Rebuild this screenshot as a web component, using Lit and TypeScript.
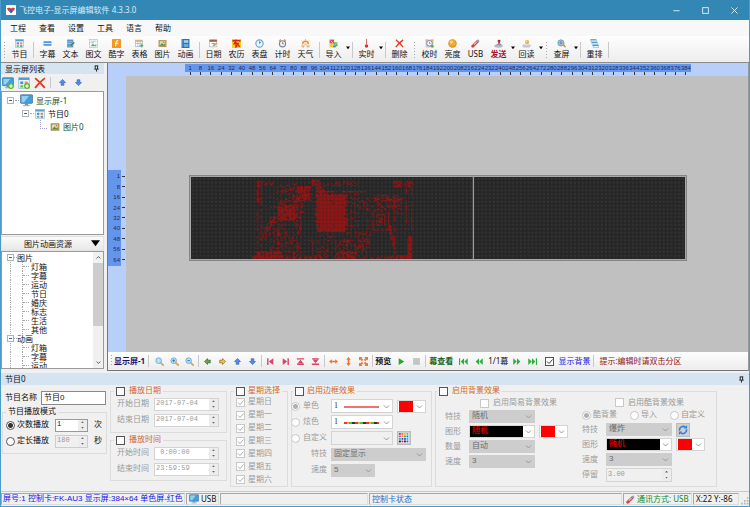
import { LitElement, html, svg, css, nothing, TemplateResult } from "lit";
import { customElement } from "lit/decorators.js";
import { classMap } from "lit/directives/class-map.js";

/* ---------- icons, all on a 16 x 16 grid ---------- */
const glass = (mark: unknown) => svg`<path d="M10 10l4.5 4.5" stroke="#e0a850" stroke-width="3.4" stroke-linecap="round"/><circle cx="6.5" cy="6.5" r="5" fill="#b9e2f7" stroke="#6fa9cf" stroke-width="1.6"/>${mark}`;
const pic = svg`<rect x="1" y="2" width="14" height="12" fill="#b58a45"/><rect x="3" y="4" width="10" height="8" fill="#cfe3b8"/><path d="M3 12l4-5 3 3 2-2 1 4z" fill="#5b8f4a"/><circle cx="10.500" cy="6" r="1.300" fill="#d8603a"/>`;
const program = svg`<rect x="1" y="1" width="14" height="14" fill="#eef5fb" stroke="#8fb4d6"/><rect x="1" y="1" width="14" height="3" fill="#5b9bd8"/><rect x="3" y="6" width="4" height="3.500" fill="#4a90d9"/><rect x="9" y="6" width="4" height="3.500" fill="#ef8d3c"/><rect x="3" y="11" width="4" height="3" fill="#6cbf4a"/><rect x="9" y="11" width="4" height="3" fill="#4a90d9"/>`;
const monitor = svg`<rect x="0.500" y="1" width="15" height="10.500" rx="1" fill="#3f9fdc" stroke="#5a7488"/><path d="M2 2.500h9L5 10H2z" fill="#8fd0f5"/><rect x="6" y="11.500" width="4" height="2" fill="#7d8c99"/><rect x="4" y="13.500" width="8" height="1.500" fill="#9fb0bd"/>`;
const plus = svg`<circle cx="12" cy="12" r="4" fill="#5db82c"/><path d="M12 9.500v5M9.500 12h5" stroke="#fff" stroke-width="1.500"/>`;
const arrow = (fill: string, stroke: string, turn: number) =>
  svg`<path transform="rotate(${turn} 8 8)" d="M8 2.500l5.500 5.500h-3v5h-5V8h-3z" fill=${fill} stroke=${stroke}/>`;
const usb = svg`<path d="M3 13L11 5" stroke="#c7473c" stroke-width="5" stroke-linecap="round"/><path d="M5 10l5-5" stroke="#f3c9c2" stroke-width="2"/><path d="M11 5l3-3" stroke="#8aa4bb" stroke-width="4"/>`;
const rewind = svg`<path d="M9 2v12L3 8zM15.500 2v12L9.500 8z" fill="#25b13c"/>`;
const forward = svg`<path d="M7 2v12l6-6zM.5 2v12l6-6z" fill="#25b13c"/>`;

const ICONS: Record<string, unknown> = {
  logo: svg`<rect width="16" height="16" rx="1" fill="#fff"/><path d="M1.500 5.500L5 4l3 1.500L11 4l3.500 1.500L12.500 9h-9z" fill="#e2342c"/><path d="M4.500 9.500L8 7l3.500 2.500L8 13.500z" fill="#2f5bd0"/>`,
  program, monitor, pic, usb,
  subtitle: svg`<rect x="1" y="4" width="14" height="8" fill="#4f93d2"/><rect x="1" y="7" width="14" height="2" fill="#dcecf9"/>`,
  text: svg`<rect x="2" y="1" width="11" height="14" fill="#4d9bd6"/><path d="M2 5h9M2 8h7" stroke="#bfe0f5"/><path d="M7 11l6-6 2.500 2-6 6-3 1z" fill="#2b6da5" stroke="#e6c27a"/>`,
  mixed: svg`<rect x="1" y="1" width="14" height="14" fill="#f4fafd" stroke="#8ec0de"/><path d="M3 4h10M3 6.500h6" stroke="#6ab0dd"/><path d="M3 13l4-5 3 3 3-2v4z" fill="#67b55c"/>`,
  cool: svg`<rect width="16" height="16" rx="1" fill="#f39a1d"/><path d="M11 3.500q-3-1.500-3.500 2L6.500 13M5 7.500h6" stroke="#fff" stroke-width="1.800" fill="none"/>`,
  table: svg`<rect x="1" y="2" width="12" height="11" fill="#fff" stroke="#7ba7cc"/><rect x="1" y="2" width="12" height="3" fill="#e6a85a"/><path d="M1 8h12M5 5v8M9 5v8" stroke="#7ba7cc"/><path d="M8 12h7M12 9v6" stroke="#58b03a" stroke-width="2"/>`,
  film: svg`<rect x="1" y="0" width="14" height="16" fill="#2e6fae"/><rect x="5" y="2" width="8" height="5" fill="#9bd0f2"/><rect x="5" y="9" width="8" height="5" fill="#6ab1e2"/><path d="M3 1v14" stroke="#a9cdea" stroke-dasharray="2 1.500"/>`,
  date: svg`<rect x="1" y="2" width="13" height="12" fill="#fbfbfb" stroke="#a9a9a9"/><rect x="1" y="1" width="13" height="4" fill="#a65b3d"/><path d="M5 8h5l-3 5" stroke="#555" fill="none"/><path d="M9 12l5-5" stroke="#e48b2c" stroke-width="2"/>`,
  lunar: svg`<rect width="16" height="16" fill="#f7d21a"/><path d="M2 5V3h12v2M8 1L3 10M7 5v9l3-2M8 7l6 7M12 7l-3 3" stroke="#e02416" stroke-width="2.400" fill="none"/>`,
  dial: svg`<circle cx="8" cy="8" r="6.500" fill="#eaf4fb" stroke="#6ea3d0" stroke-width="2"/><path d="M8 4v4l3-3" stroke="#3f6c96" stroke-width="1.300" fill="none"/>`,
  timer: svg`<path d="M2 4l3-3M14 4l-3-3" stroke="#d9a13a" stroke-width="2.500"/><circle cx="8" cy="8.500" r="5.500" fill="#f7f3e0" stroke="#7d80b8" stroke-width="2"/><path d="M8 5.500v3h2.500" stroke="#444" fill="none"/>`,
  weather: svg`<path d="M3 9a5 5 0 0 1 10 0" fill="none" stroke="#f08a24" stroke-width="2.500"/><path d="M8 .5v2M2 3l1.500 1.500M14 3l-1.500 1.500M2 10v5M5.500 10l-1 5M10.500 10l1 5M14 10v5" stroke="#f39a3a" stroke-width="1.700"/><circle cx="8" cy="9" r="2" fill="#f9c987"/>`,
  import: svg`<rect x="1" y="1" width="8" height="7" fill="#e24b5d"/><rect x="1" y="9" width="6" height="6" fill="#f1c83a"/><rect x="8" y="6" width="7" height="7" fill="#58b947"/><path d="M3 3l4 4" stroke="#fff"/><path d="M9.500 11l4-3" stroke="#fff"/><rect x="7" y="12" width="5" height="3" fill="#4b8be0"/>`,
  live: svg`<path d="M8 0v9" stroke="#e36a6a" stroke-width="2"/><circle cx="8" cy="12.500" r="3" fill="#d92e2e"/>`,
  del: svg`<path d="M1.500 1.500Q8 7 14.500 14.500M14.500 1.500Q7 7 1.500 14.500" stroke="#e0391d" stroke-width="2.400" fill="none"/>`,
  sync: svg`<rect x="1" y="1" width="14" height="14" fill="#bfcbe6"/><circle cx="8" cy="7.500" r="5" fill="#fdf9e6" stroke="#7b6fb0" stroke-width="1.500"/><path d="M8 5v3h2" stroke="#555" fill="none"/><path d="M1 2h4M11 2h4" stroke="#e2b23e" stroke-width="2"/><circle cx="13" cy="13" r="2.500" fill="#5db82c"/>`,
  sun: svg`<circle cx="8" cy="8" r="7.500" fill="#d98a1e"/><circle cx="8" cy="7.500" r="6" fill="#f2a92f"/><circle cx="6" cy="5.500" r="3" fill="#fbd67a"/>`,
  send: svg`<ellipse cx="8" cy="12.500" rx="7.500" ry="3" fill="#b9b9c2"/><path d="M3 11l4-3h5l2 3z" fill="#8f97a8"/><path d="M5 4l4-3 4 3h-2.500v4h-3V4z" fill="#b5182b"/>`,
  read: svg`<ellipse cx="8" cy="12" rx="7.500" ry="3.300" fill="#c3c3c9"/><path d="M3 11l4-4h4l3 4z" fill="#e4e4e8"/><circle cx="9" cy="5.500" r="3.800" fill="#e8b04a"/><circle cx="8" cy="4.500" r="1.500" fill="#fae3ab"/>`,
  inspect: svg`<circle cx="7" cy="7" r="5.500" fill="#8cc7ec" stroke="#5f9cc9" stroke-width="1.500"/><path d="M11.500 10.500l3.500 4" stroke="#dc9b3c" stroke-width="3"/><path d="M7 3.500v6M4.500 7h5" stroke="#dd6b4d" stroke-width="2"/>`,
  rearrange: svg`<path d="M1 1h10l1 4H2zM3 6h10l1 4H4zM5 11h10l1 4H6z" fill="#e6f3fb" stroke="#6fb4dc"/><path d="M1 1.500h10M3 6.500h10M5 11.500h10" stroke="#3a8fc4" stroke-width="1.600"/>`,
  addScreen: svg`${monitor}${plus}`,
  addProgram: svg`${program}${plus}`,
  up: arrow("#4c8bf0", "#2a5fc0", 0),
  down: arrow("#4c8bf0", "#2a5fc0", 180),
  left: arrow("#6aa544", "#2e5c3c", 270),
  right: arrow("#ecc24a", "#6e5a20", 90),
  zoom: glass(nothing),
  zoomIn: glass(svg`<path d="M6.500 4v5M4 6.500h5" stroke="#2b6da5" stroke-width="1.500"/>`),
  zoomOut: glass(svg`<path d="M4 6.500h5" stroke="#2b6da5" stroke-width="1.500"/>`),
  alignL: svg`<path d="M2 2h2.500v12H2zM13 2v12L5 8z" fill="#d8456a"/>`,
  alignR: svg`<path d="M11.500 2H14v12h-2.500zM3 2v12l8-6z" fill="#d8456a"/>`,
  alignT: svg`<path d="M1.500 2h13v2.500h-13zM8 5l5 6H3zM2 11.500h12V14H2z" fill="#d8456a"/>`,
  alignB: svg`<path d="M1.500 11.500h13V14h-13zM8 11l5-6H3zM2 2h12v2.500H2z" fill="#d8456a"/>`,
  wide: svg`<path d="M0 8l5-4v2.500h6V4l5 4-5 4V9.500H5V12z" fill="#f4742b"/>`,
  tall: svg`<path d="M8 0l4 5H9.500v6H12l-4 5-4-5h2.500V5H4z" fill="#f4742b"/>`,
  full: svg`<path d="M0 0h6L4.500 2l3 3L5 7.500l-3-3L0 6zM16 0v6l-2-1.500-3 3L8.500 5l3-3L10 0zM0 16v-6l2 1.500 3-3L7.500 11l-3 3L6 16zM16 16h-6l1.500-2-3-3L11 8.500l3 3 2-1.500z" fill="#f4742b"/>`,
  play: svg`<path d="M3 2v12l10-6z" fill="#1faa32"/>`,
  stop: svg`<rect x="2" y="2" width="12" height="12" fill="#c4c4c4"/>`,
  first: svg`<path d="M0 2h2v12H0z" fill="#25b13c"/>${rewind}`,
  prev: rewind,
  next: forward,
  last: svg`<path d="M14 2h2v12h-2z" fill="#25b13c"/>${forward}`,
  pin: svg`<path d="M4 2h8M5 2v7M10.500 2v7M3 9.500h10M8 10v5" stroke="#111" stroke-width="2" fill="none"/>`,
  refresh: svg`<path d="M2.500 9A5.600 5.600 0 0 1 12 4M13.500 7A5.600 5.600 0 0 1 4 12" fill="none" stroke="#2f7fd6" stroke-width="2.600"/><path d="M9.500 5.500h5V0zM6.500 10.500h-5V16z" fill="#2f7fd6"/>`,
  palette: svg`<rect width="16" height="16" fill="#fff"/>${["#d33", "#f55", "#fb3", "#5c3", "#e3c", "#f80", "#3a3", "#26f", "#0cc", "#26f", "#93c", "#0cc", "#222", "#b33", "#222", "#44f"].map(
    (c, i) => svg`<rect x=${(i % 4) * 4} y=${Math.floor(i / 4) * 4} width="3" height="3" fill=${c}/>`)}`,
  min: svg`<path d="M1 8.500h14" stroke="#e8f2f8" stroke-width="2"/>`,
  max: svg`<rect x="1.500" y="1.500" width="13" height="13" fill="none" stroke="#e8f2f8" stroke-width="2"/>`,
  close: svg`<path d="M1 1l14 14M15 1L1 15" stroke="#e8f2f8" stroke-width="2"/>`,
  caret: svg`<path d="M0 2h16L8 13z" fill="#000"/>`,
  scrollUp: svg`<path d="M2 11l6-6 6 6" fill="none" stroke="#555" stroke-width="3"/>`,
  scrollDown: svg`<path d="M2 5l6 6 6-6" fill="none" stroke="#555" stroke-width="3"/>`,
  grip: svg`<path d="M12 2h3v3h-3zM12 7h3v3h-3zM12 12h3v3h-3zM7 7h3v3H7zM7 12h3v3H7zM2 12h3v3H2z" fill="#b5b5b5"/>`,
};

const icon = (name: string, size = "i9"): TemplateResult =>
  html`<svg class="icon ${size}" viewBox="0 0 16 16" aria-hidden="true">${ICONS[name]}</svg>`;

/* ---------- LED picture: rectangles [x, y, w, h, fill ratio] in LED cells ---------- */
const AREAS = [
  [97, 14, 24, 29, 0.97], [98, 10, 8, 6, 0.8], [93, 2, 7, 5, 0.7], [96, 5, 7, 6, 0.7], [82, 7, 11, 12, 0.8],
  [68, 22, 14, 12, 0.85], [80, 18, 8, 10, 0.4], [81, 26, 5, 16, 0.35], [69, 6, 5, 16, 0.35], [74, 5, 8, 6, 0.4], [76, 12, 7, 10, 0.4],
  [51, 3, 2, 17, 0.75], [54, 3, 1, 17, 0.7], [51, 20, 1, 38, 0.45], [54, 20, 1, 38, 0.45],
  [51, 3, 15, 4, 0.4], [64, 27, 5, 6, 0.6], [61, 31, 5, 5, 0.55], [58, 35, 6, 6, 0.5], [55, 39, 6, 6, 0.55], [54, 44, 5, 5, 0.4],
  [66, 34, 8, 9, 0.3], [62, 42, 24, 16, 0.22], [67, 40, 2, 18, 0.5],
  [51, 58, 20, 6, 0.8], [47, 62, 125, 2, 0.5], [71, 58, 44, 5, 0.2], [115, 58, 14, 6, 0.65], [157, 3, 7, 5, 0.85],
  [167, 3, 5, 5, 0.85], [155, 61, 17, 3, 0.7], [168, 46, 4, 18, 0.9], [167, 8, 1, 34, 0.5], [171, 8, 1, 34, 0.5],
  [141, 14, 22, 5, 0.5], [143, 19, 6, 8, 0.35], [151, 18, 8, 8, 0.45], [159, 16, 6, 14, 0.25],
  [131, 18, 10, 8, 0.2], [129, 14, 1, 28, 0.6], [137, 14, 1, 28, 0.4], [121, 14, 8, 28, 0.15], [104, 3, 26, 4, 0.3],
  [106, 11, 30, 1, 0.6], [106, 13, 24, 1, 0.4], [93, 43, 46, 15, 0.15], [115, 47, 8, 9, 0.25], [129, 42, 10, 18, 0.2],
  [158, 14, 1, 46, 0.6], [154, 38, 2, 6, 0.5], [155, 43, 2, 6, 0.5], [156, 48, 2, 6, 0.5], [141, 27, 1, 14, 0.8], [153, 27, 1, 14, 0.8], [141, 41, 13, 1, 0.8],
  [144, 29, 7, 1, 0.9], [144, 37, 7, 1, 0.9], [144, 29, 1, 9, 0.9], [150, 29, 1, 9, 0.9], [146, 32, 3, 4, 0.9], [62, 8, 6, 22, 0.06],
];

function ledPath(): string {
  let seed = 77;
  const next = () => (seed = (seed * 1103515245 + 12345) % 2147483648) / 2147483648;
  let d = "";
  for (const [x, y, w, h, ratio] of AREAS) {
    const ragged = w > 4 && h > 4 ? 3 : 0;
    for (let r = y; r < y + h; r++) {
      const from = x + Math.round((next() - 0.5) * ragged);
      const to = x + w + Math.round((next() - 0.5) * ragged);
      for (let c = from; c < to; c++) {
        if (next() < ratio) d += `M${c} ${r}h1v1h-1z`;
      }
    }
  }
  return d;
}

const H_MARKS = [1, ...Array.from({ length: 48 }, (_, i) => (i + 1) * 8)];
const V_MARKS = [1, ...Array.from({ length: 8 }, (_, i) => (i + 1) * 8)];

type Tool = [string, string, string?];
const TOOLS: Tool[] = [
  ["grip", ""], ["program", "节目"], ["sep", ""],
  ["subtitle", "字幕"], ["text", "文本"], ["mixed", "图文"], ["cool", "酷字"], ["table", "表格"], ["pic", "图片"], ["film", "动画"], ["sep", ""],
  ["date", "日期"], ["lunar", "农历"], ["dial", "表盘"], ["timer", "计时"], ["weather", "天气"], ["sep", ""],
  ["import", "导入", "menu"], ["sep", ""], ["live", "实时", "menu"], ["sep", ""], ["del", "删除"], ["grip", ""],
  ["sync", "校时"], ["sun", "亮度"], ["usb", "USB"], ["send", "发送", "menu"], ["read", "回读", "menu"], ["grip", ""],
  ["inspect", "查屏", "menu"], ["sep", ""], ["rearrange", "重排"],
];
const RESOURCES: [string, string[]][] = [
  ["图片", ["灯箱", "字幕", "运动", "节日", "婚庆", "标志", "生活", "其他"]],
  ["动画", ["灯箱", "字幕", "运动"]],
];

@customElement("app-root")
export class AppRoot extends LitElement {
  static styles = css`
    :host {
      display: block;
      font: 8px/10px "Noto Sans", "Noto Sans CJK SC", sans-serif;
      color: #111;
    }
    *, *::before, *::after { box-sizing: border-box; }
    button, input, select { font: inherit; color: inherit; margin: 0; padding: 0; border: 0; background: none; border-radius: 0; }
    ul { list-style: none; margin: 0; padding: 0; }
    .icon { display: block; flex: none; }
    .i4 { width: 4px; height: 4px; }
    .i5 { width: 5px; height: 5px; }
    .i7 { width: 7px; height: 7px; }
    .i9 { width: 9px; height: 9px; }
    .i10 { width: 10px; height: 10px; }
    .i12 { width: 12px; height: 12px; }
    .i13 { width: 13px; height: 13px; }

    .window { min-height: 100vh; display: flex; flex-direction: column; background: #f0f0f0; border: 1px solid #4a9cc6; border-top: 0; white-space: nowrap; }
    .title { height: 20px; display: flex; align-items: center; background: #3387b5; color: #dcecf5; padding-left: 5px; gap: 3px; }
    .title h1 { flex: 1; margin: 0; font-size: 8px; font-weight: 400; }
    .title .caption { display: flex; }
    .title button { width: 29px; height: 20px; display: grid; place-items: center; }
    .menu { height: 16px; display: flex; align-items: center; gap: 13px; padding-left: 9px; background: #f8f8f8; }

    .tools { height: 27px; display: flex; padding: 3px 0 1px; background: linear-gradient(#fefefe, #ededed); border-bottom: 1px solid #8c8c8c; }
    .tool { width: 23px; display: flex; flex-direction: column; align-items: center; gap: 1px; }
    .tool.send { color: #a11222; font-weight: 700; }
    .drop { width: 5px; display: flex; align-items: center; justify-content: center; padding-bottom: 4px; }
    .sep { width: 5px; display: flex; justify-content: center; padding: 3px 0; }
    .sep::before { content: ""; width: 1px; background: #c9c9c9; }
    .grip { width: 7px; display: flex; justify-content: center; padding: 3px 0; }
    .grip::before { content: ""; width: 1px; background: repeating-linear-gradient(#aaa 0 1px, transparent 1px 3px); }

    .middle { flex: 1; display: grid; grid-template-columns: 103px 1fr; gap: 3px; }
    .side { display: flex; flex-direction: column; padding: 0 0 2px; }
    .bar { height: 11px; display: flex; align-items: center; justify-content: space-between; padding: 0 4px; background: #d6e4f1; }
    .bar h2 { margin: 0; font-size: 8px; font-weight: 400; }
    .side-tools { height: 17px; display: flex; align-items: center; gap: 4px; padding-left: 1px; }
    .side-tools .sep { height: 17px; width: 1px; }
    .side-tools .nudge { padding: 0 3px; }
    .screens { flex: 1; border: 1px solid #9a9a9a; background: #fff; padding: 2px 0 0 5px; }
    .screens li, .resources li { display: flex; align-items: center; }
    .screens li { height: 13px; gap: 1px; color: #14501c; }
    .screens .node { color: #111; padding-left: 15px; }
    .screens .leaf { padding-left: 33px; gap: 3px; }
    .toggle { width: 7px; height: 7px; flex: none; border: 1px solid #a9b4be; background: linear-gradient(#3a5fa8, #3a5fa8) center / 3px 1px no-repeat #fff; }
    .dash { width: 4px; flex: none; border-top: 1px dotted #a0a0c8; }
    .elbow { width: 7px; height: 9px; flex: none; align-self: flex-start; border: dotted #a0a0d8; border-width: 0 0 1px 1px; }
    .picker { height: 15px; margin: 1px 0 0; display: flex; align-items: center; justify-content: space-between; padding: 0 3px 0 22px; background: linear-gradient(#fafafa, #e8e8e8); border: 1px solid #e2e2e2; }
    .resources { height: 118px; display: flex; border: 1px solid #9a9a9a; background: #fff; overflow: hidden; }
    .resources > ul { flex: 1; padding: 1px 0 0 5px; }
    .resources li { height: 9px; line-height: 9px; }
    .resources li > .dash { width: 3px; }
    .resources .child { margin-left: 3px; padding-left: 11px; gap: 2px; border-left: 1px dotted #aaa; }
    .resources .child .dash { border-color: #aaa; width: 6px; }
    .resources .child::before { content: ""; height: 9px; border-left: 1px dotted #aaa; margin-right: -2px; }
    .scroll { width: 10px; display: flex; flex-direction: column; align-items: center; background: #f0f0f0; padding: 3px 0; gap: 3px; }
    .thumb { width: 10px; height: 63px; background: #cdcdcd; margin-bottom: auto; }

    .main { display: flex; flex-direction: column; border: 1px solid #777; border-top: 0; border-right-color: #999; }
    .stage { flex: 1; display: grid; grid-template-columns: 18px 59px 1fr 57px; grid-template-rows: 13px 94px auto 1fr; background: #c0c0c0; }
    .strip-top { grid-area: 1 / 1 / 2 / -1; background: #b8d0f9; }
    .strip-left { grid-area: 1 / 1 / -1 / 2; background: #b8d0f9; }
    .h-ruler { grid-area: 1 / 3; display: flex; padding-top: 1px; font: 6px/8px "Liberation Sans", sans-serif; color: #1c2b55; background: linear-gradient(#6495ed, #6495ed) 0 1px / 100% 8px no-repeat; }
    .h-ruler span { flex: 1 1 0; width: 0; display: flex; flex-direction: column; align-items: center; }
    .h-ruler span::after { content: ""; width: 1px; height: 3px; background: #333; }
    .v-ruler { grid-area: 3 / 1; display: flex; flex-direction: column; padding: 1px 0; font: 6px/8px "Liberation Sans", sans-serif; color: #1c2b55; background: linear-gradient(#6495ed, #6495ed) 0 0 / 13px 100% no-repeat; }
    .v-ruler span { flex: 1; display: flex; align-items: center; justify-content: flex-end; gap: 2px; padding-right: 1px; }
    .v-ruler span::after { content: ""; width: 3px; height: 1px; background: #333; }
    .led { grid-area: 3 / 3; margin: 5px 4px; border: 1px solid #858585; outline: 1px solid #a8a8a8; outline-offset: -2px; padding: 1px; background: #262626; }
    .led svg { display: block; width: 100%; height: 82px; }

    .view-tools { height: 18px; display: flex; align-items: center; background: linear-gradient(#fdfdfd, #ececec); }
    .view-tools button { width: 15px; height: 14px; display: grid; place-items: center; }
    .view-tools .sep { height: 18px; width: 3px; }
    .view-tools .sep.wide { width: 7px; }
    .view-tools .grip { width: 6px; height: 18px; }
    .screen-name { color: #14146e; font-weight: 700; }
    .preview { font-weight: 700; padding: 0 3px 0 1px; }
    .browse { font-weight: 700; color: #12641a; padding: 0 3px 0 2px; }
    .show-bg { display: flex; align-items: center; gap: 4px; padding-left: 5px; color: #1818e0; }
    .tip { color: #8c1616; padding-left: 2px; }

    .dock .bar { margin-top: 2px; height: 12px; }
    .panel { display: grid; grid-template-columns: 105px 117px 58px 141px 282px; column-gap: 3px; padding: 1px 0 4px 1px; height: 106px; font-family: "Liberation Sans", "Noto Sans CJK SC", sans-serif; }
    fieldset { margin: 0; padding: 0; min-width: 0; border: 1px solid #dcdcdc; display: flex; flex-direction: column; color: #9a9a9a; }
    legend { height: 10px; padding: 0 2px; margin-left: 3px; color: #d2691e; }
    legend.plain { color: #111; }
    label { display: flex; align-items: center; gap: 4px; }
    .column { display: flex; flex-direction: column; }
    .name { height: 15px; margin: 4px 0 2px; display: flex; align-items: center; justify-content: space-between; padding: 0 1px 0 3px; }
    .name input { width: 65px; height: 14px; border: 1px solid #8a8a8a; background: #fff; padding: 0 2px 2px; }
    .mode { height: 47px; color: #111; }
    .row { display: flex; align-items: center; height: 16px; gap: 5px; padding-left: 4px; }
    .row label { gap: 3px; }
    .mode .row { padding-left: 3px; gap: 6px; }
    .mode .row label { gap: 2px; }
    .off { color: #9a9a9a; }

    input[type="checkbox"], input[type="radio"] { appearance: none; width: 9px; height: 9px; flex: none; background: #fff; border: 1px solid #555; }
    input[type="radio"] { border-radius: 50%; }
    input[type="radio"]:checked { background: radial-gradient(circle, #333 0 2px, #fff 3px); }
    input[type="radio"]:disabled:checked { background: radial-gradient(circle, #b0b0b0 0 2px, #fff 3px); }
    input[type="checkbox"]:checked { background: var(--tick) center / 7px 7px no-repeat #fff;
      --tick: url("data:image/svg+xml,%3Csvg xmlns='http://www.w3.org/2000/svg' viewBox='0 0 7 7'%3E%3Cpath d='M1 3.500l2 2 3.500-4' fill='none' stroke='%23444'/%3E%3C/svg%3E"); }
    input[type="checkbox"]:disabled:checked {
      --tick: url("data:image/svg+xml,%3Csvg xmlns='http://www.w3.org/2000/svg' viewBox='0 0 7 7'%3E%3Cpath d='M1 3.500l2 2 3.500-4' fill='none' stroke='%23aaa'/%3E%3C/svg%3E"); }
    input:disabled { border-color: #c8c8c8; }
    input[type="checkbox"]:disabled, input[type="radio"]:disabled { border-color: #c8c8c8; }

    .spin { display: flex; height: 13px; border: 1px solid #d4d4d4; background: #fff; font: 7px/9px "Liberation Mono", monospace; }
    .spin input { flex: 1; width: 0; min-width: 0; padding-left: 1px; padding-bottom: 1px; }
    .spin .arrows { width: 9px; display: grid; grid-template-rows: 1fr 1fr; background: #ececec; }
    .spin button { display: grid; place-items: center; }
    .spin .tri { width: 3px; height: 2px; background: #666; clip-path: polygon(50% 0, 100% 100%, 0 100%); }
    .spin .tri.dn { clip-path: polygon(0 0, 100% 0, 50% 100%); }
    .count { width: 33px; border-color: #9a9a9a; }
    .count.off { border-color: #ccc; background: #f0f0f0; }
    .stamp { width: 65px; }
    .hold { width: 66px; height: 14px; background: #f0f0f0; }

    .dates { height: 47px; }
    .times { height: 46px; margin-top: 2px; }
    .dates .row, .times .row { padding-left: 6px; gap: 5px; }
    .week { display: flex; flex-direction: column; padding-left: 5px; }
    .week legend { margin-left: -2px; }
    .week label { flex: 1; gap: 3px; }
    .week legend label, .frame legend label { gap: 3px; }

    select { appearance: none; height: 13px; padding: 0 12px 1px 2px; border: 1px solid #d4d4d4;
      background: var(--chev) right 2px center / 7px 7px no-repeat #fff;
      --chev: url("data:image/svg+xml,%3Csvg xmlns='http://www.w3.org/2000/svg' viewBox='0 0 7 7'%3E%3Cpath d='M1 2.500l2.500 2.500 2.500-2.500' fill='none' stroke='%23999'/%3E%3C/svg%3E"); }
    select:disabled { opacity: 1; }
    .gray { background-color: #cdcdcd; border-color: #cdcdcd; color: #6c6c6c; }
    .line { width: 62px; height: 14px; color: #333; font-family: "Liberation Serif", serif; }
    .line.solid { background: linear-gradient(#f46f6f, #f46f6f) 12px 6px / 35px 2px no-repeat, var(--chev) right 2px center / 7px 7px no-repeat #fff; }
    .line.multi { background: repeating-linear-gradient(90deg, #e33 0 3px, #ea3 3px 5px, #3c3 5px 8px, #333 8px 11px) 12px 6px / 35px 2px no-repeat, var(--chev) right 2px center / 7px 7px no-repeat #fff; }
    .line.none { background-color: #f0f0f0; }
    .swatch { width: 29px; background: linear-gradient(#f00, #f00) 1px 0 / 14px 11px no-repeat, var(--chev) right 2px center / 7px 7px no-repeat #fff; color: transparent; }
    .random { width: 66px; color: #f00; background: linear-gradient(#000, #000) 0 0 / 53px 11px no-repeat, var(--chev) right 2px center / 7px 7px no-repeat #fff; }
    .w66 { width: 66px; }
    .w95 { width: 95px; }
    .w44 { width: 44px; }
    .square { width: 14px; height: 14px; display: grid; place-items: center; background: #d0d0d0; border: 1px solid #bbb; }

    .grid { display: grid; align-items: center; align-content: start; justify-content: start; }
    .frame .grid { grid-template-columns: 36px 62px 29px; grid-auto-rows: 16px; column-gap: 4px; padding: 2px 0 0 1px; margin-left: -2px; }
    .frame legend { margin-left: 1px; }
    .background legend { margin-left: 1px; }
    .frame .tag { justify-self: end; }
    .span2 { grid-column: span 2; }
    .frame label { gap: 3px; }
    .background .halves { display: grid; grid-template-columns: 137px 1fr; padding-top: 1px; }
    .background .grid { grid-template-columns: 20px 66px 29px; grid-auto-rows: 15px; column-gap: 4px; padding-left: 9px; }
    .background .grid .start { grid-column-start: 1; }
    .easy { height: 12px; padding-left: 44px; }
    .easy-cool { height: 11px; padding-left: 42px; }
    .choices { height: 14px; display: flex; gap: 13px; padding-left: 9px; }
    .choices label { gap: 2px; }

    .status { height: 15px; display: grid; grid-template-columns: 184px 33px 148px 1fr 69px 46px 9px; gap: 1px; align-items: stretch; border-top: 1px solid #c8c8c8; padding: 1px 0; }
    .cell { display: flex; align-items: center; gap: 2px; border: 1px solid #a8a8a8; border-right-color: #ddd; border-bottom-color: #ddd; padding: 0 2px; overflow: hidden; }
    .cell.info { font-family: "Liberation Sans", "Noto Sans CJK SC", sans-serif; color: #1414e6; padding-left: 1px; }
    .cell.state { color: #1c6fc8; }
    .cell.link { color: #128a1c; }
    .corner { align-self: end; }
  `;

  private tool([name, text, menu]: Tool) {
    if (name === "sep" || name === "grip") return html`<span class=${name}></span>`;
    return html`<button class=${classMap({ tool: true, send: name === "send" })}>${icon(name)}${text}</button>
      ${menu ? html`<button class="drop" aria-label="${text}菜单">${icon("caret", "i4")}</button>` : nothing}`;
  }

  private small(names: string[]) {
    return names.map((n) => html`<button aria-label=${n}>${icon(n, "i9")}</button>`);
  }

  private spin(id: string, value: string, kind: string, disabled = true) {
    return html`<span class="spin ${kind} ${disabled ? "off" : ""}">
      <input id=${id} type="text" aria-label=${id} .value=${value} ?disabled=${disabled} />
      <span class="arrows"><button aria-label="增加"><i class="tri"></i></button><button aria-label="减少"><i class="tri dn"></i></button></span>
    </span>`;
  }

  private stamp(id: string, label: string, value: string) {
    return html`<div class="row"><label for=${id}>${label}</label>${this.spin(id, value, "stamp")}</div>`;
  }

  private pick(id: string, value: string, kind: string) {
    return html`<select id=${id} class=${kind} disabled aria-label=${id}><option>${value}</option></select>`;
  }

  render() {
    return html`<div class="window">
      <header class="title">${icon("logo", "i10")}<h1>飞控电子-显示屏编辑软件 4.3.3.0</h1>
        <div class="caption">
          <button aria-label="最小化">${icon("min", "i7")}</button><button aria-label="最大化">${icon("max", "i7")}</button><button aria-label="关闭">${icon("close", "i7")}</button>
        </div>
      </header>
      <nav class="menu">${["工程", "查看", "设置", "工具", "语言", "帮助"].map((m) => html`<button>${m}</button>`)}</nav>
      <div class="tools">${TOOLS.map((t) => this.tool(t))}<span class="sep"></span></div>

      <div class="middle">
        <aside class="side">
          <div class="bar"><h2>显示屏列表</h2>${icon("pin", "i7")}</div>
          <div class="side-tools">
            <button aria-label="添加显示屏">${icon("addScreen", "i12")}</button><button aria-label="添加节目">${icon("addProgram", "i12")}</button>
            <button aria-label="删除">${icon("del", "i12")}</button><span class="sep"></span>
            <button class="nudge" aria-label="上移">${icon("up")}</button><button aria-label="下移">${icon("down")}</button>
          </div>
          <ul class="screens">
            <li><span class="toggle"></span><span class="dash"></span>${icon("monitor", "i13")}&nbsp;显示屏-1</li>
            <li class="node"><span class="toggle"></span><span class="dash"></span>${icon("program", "i10")}&nbsp;节目0</li>
            <li class="leaf"><span class="elbow"></span>${icon("pic", "i10")}图片0</li>
          </ul>
          <button class="picker">图片动画资源${icon("caret")}</button>
          <div class="resources">
            <ul>${RESOURCES.map(([name, items]) => html`<li><span class="toggle"></span><span class="dash"></span>${name}</li>
              ${items.map((it) => html`<li class="child"><span class="dash"></span>${it}</li>`)}`)}</ul>
            <div class="scroll">${icon("scrollUp", "i5")}<span class="thumb"></span>${icon("scrollDown", "i5")}</div>
          </div>
        </aside>

        <main class="main">
          <div class="stage">
            <div class="strip-left"></div><div class="strip-top"></div>
            <div class="h-ruler">${H_MARKS.map((n) => html`<span>${n}</span>`)}</div>
            <div class="v-ruler">${V_MARKS.map((n) => html`<span>${n}</span>`)}</div>
            <div class="led">
              <svg viewBox="0 0 384 64" preserveAspectRatio="none">
                <defs><pattern id="dots" width="3" height="3" patternUnits="userSpaceOnUse"><rect x="0.500" y="0.500" width="1.600" height="1.600" fill="#363636"/></pattern>
                <pattern id="mesh" width="3" height="3" patternUnits="userSpaceOnUse"><path d="M0 0h3v1H1v2H0z" fill="#262626" fill-opacity="0.300"/></pattern></defs>
                <rect width="384" height="64" fill="url(#dots)"/>
                <path d=${ledPath()} fill="#981414"/>
                <rect width="384" height="64" fill="url(#mesh)"/>
                <rect x="219" width="1" height="64" fill="#9a9a9a"/>
              </svg>
            </div>
          </div>
          <div class="view-tools">
            <span class="grip"></span><span class="screen-name">显示屏-1</span><span class="sep wide"></span>
            ${this.small(["zoom", "zoomIn", "zoomOut"])}<span class="sep"></span>
            ${this.small(["left", "right", "up", "down"])}<span class="sep"></span>
            ${this.small(["alignL", "alignR", "alignT", "alignB"])}<span class="sep"></span>
            ${this.small(["wide", "tall", "full"])}<span class="sep"></span>
            <span class="preview">预览</span>${this.small(["play", "stop"])}<span class="sep"></span>
            <span class="browse">幕查看</span>${this.small(["first", "prev"])}<span class="page">&nbsp;1/1幕&nbsp;</span>${this.small(["next", "last"])}
            <label class="show-bg"><input type="checkbox" checked />显示背景</label><span class="sep wide"></span>
            <span class="tip">提示:编辑时请双击分区</span>
          </div>
        </main>
      </div>

      <section class="dock">
        <div class="bar"><h2>节目0</h2>${icon("pin", "i7")}</div>
        <div class="panel">
          <div class="column">
            <div class="name"><label for="pname">节目名称</label><input id="pname" type="text" value="节目0" /></div>
            <fieldset class="mode"><legend class="plain">节目播放模式</legend>
              <div class="row"><label><input type="radio" name="mode" checked />次数播放</label>${this.spin("times", "1", "count", false)}次</div>
              <div class="row"><label><input type="radio" name="mode" />定长播放</label>${this.spin("secs", "180", "count")}秒</div>
            </fieldset>
          </div>
          <div class="column">
            <fieldset class="dates"><legend><label><input type="checkbox" />播放日期</label></legend>
              ${this.stamp("d1", "开始日期", "2017-07-04")}${this.stamp("d2", "结束日期", "2017-07-04")}</fieldset>
            <fieldset class="times"><legend><label><input type="checkbox" />播放时间</label></legend>
              ${this.stamp("t1", "开始时间", " 0:00:00")}${this.stamp("t2", "结束时间", "23:59:59")}</fieldset>
          </div>
          <fieldset class="week"><legend><label><input type="checkbox" />星期选择</label></legend>
            ${["日", "一", "二", "三", "四", "五", "六"].map((d) => html`<label><input type="checkbox" checked disabled />星期${d}</label>`)}
          </fieldset>
          <fieldset class="frame"><legend><label><input type="checkbox" />启用边框效果</label></legend>
            <div class="grid">
              <label><input type="radio" name="frame" checked disabled />单色</label>${this.pick("单色线型", "1", "line solid")}${this.pick("边框颜色", "红", "swatch")}
              <label><input type="radio" name="frame" disabled />炫色</label>${this.pick("炫色线型", "1", "line multi")}<span></span>
              <label><input type="radio" name="frame" disabled />自定义</label>${this.pick("自定义线型", "", "line none")}<button class="square" aria-label="调色板">${icon("palette", "i10")}</button>
              <label class="tag" for="边框特技">特技</label><span class="span2">${this.pick("边框特技", "固定显示", "gray w95")}</span>
              <label class="tag" for="边框速度">速度</label><span class="span2">${this.pick("边框速度", "5", "gray w44")}</span>
            </div>
          </fieldset>
          <fieldset class="background"><legend><label><input type="checkbox" />启用背景效果</label></legend>
            <div class="halves">
              <div>
                <label class="easy"><input type="checkbox" disabled />启用简易背景效果</label>
                <div class="grid">
                  <label for="简易特技">特技</label>${this.pick("简易特技", "随机", "gray w66")}
                  <label class="start" for="简易图形">图形</label>${this.pick("简易图形", "随机", "random")}${this.pick("简易颜色", "红", "swatch")}
                  <label for="简易数量">数量</label>${this.pick("简易数量", "自动", "gray w66")}
                  <label class="start" for="简易速度">速度</label>${this.pick("简易速度", "3", "gray w66")}
                </div>
              </div>
              <div>
                <label class="easy-cool"><input type="checkbox" disabled />启用酷背景效果</label>
                <div class="choices">${["酷背景", "导入", "自定义"].map((t, i) => html`<label><input type="radio" name="bg" ?checked=${i === 0} disabled />${t}</label>`)}</div>
                <div class="grid">
                  <label for="酷特技">特技</label>${this.pick("酷特技", "爆炸", "gray w66")}<button class="square" aria-label="刷新">${icon("refresh", "i10")}</button>
                  <label for="酷图形">图形</label>${this.pick("酷图形", "随机", "random")}${this.pick("酷颜色", "红", "swatch")}
                  <label for="酷速度">速度</label>${this.pick("酷速度", "3", "gray w66")}
                  <label class="start" for="hold">停留</label>${this.spin("hold", "3.00", "hold")}
                </div>
              </div>
            </div>
          </fieldset>
        </div>
      </section>

      <footer class="status">
        <span class="cell info">屏号:1 控制卡:FK-AU3 显示屏:384×64 单色屏-红色</span>
        <span class="cell">${icon("monitor", "i10")}USB</span>
        <span class="cell"></span>
        <span class="cell state">控制卡状态</span>
        <span class="cell link">${icon("usb")}通讯方式: USB</span>
        <span class="cell">X:22 Y:-86</span>
        <span class="corner">${icon("grip")}</span>
      </footer>
    </div>`;
  }
}
